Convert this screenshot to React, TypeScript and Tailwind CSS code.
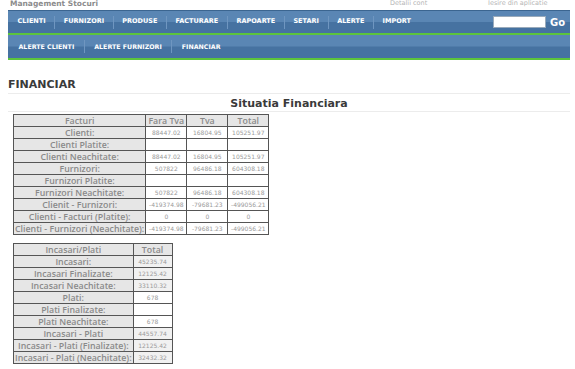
import React from 'react';

const MENU = ['CLIENTI', 'FURNIZORI', 'PRODUSE', 'FACTURARE', 'RAPOARTE', 'SETARI', 'ALERTE', 'IMPORT'];
const SUBMENU = ['ALERTE CLIENTI', 'ALERTE FURNIZORI', 'FINANCIAR'];

const facturi: [string, string, string, string][] = [
  ['Clienti:', '88447.02', '16804.95', '105251.97'],
  ['Clienti Platite:', '', '', ''],
  ['Clienti Neachitate:', '88447.02', '16804.95', '105251.97'],
  ['Furnizori:', '507822', '96486.18', '604308.18'],
  ['Furnizori Platite:', '', '', ''],
  ['Furnizori Neachitate:', '507822', '96486.18', '604308.18'],
  ['Clienit - Furnizori:', '-419374.98', '-79681.23', '-499056.21'],
  ['Clienti - Facturi (Platite):', '0', '0', '0'],
  ['Clienti - Furnizori (Neachitate):', '-419374.98', '-79681.23', '-499056.21'],
];

// third item: value cell shaded
const incasari: [string, string, boolean][] = [
  ['Incasari:', '45235.74', true],
  ['Incasari Finalizate:', '12125.42', true],
  ['Incasari Neachitate:', '33110.32', true],
  ['Plati:', '678', false],
  ['Plati Finalizate:', '', false],
  ['Plati Neachitate:', '678', false],
  ['Incasari - Plati', '44557.74', true],
  ['Incasari - Plati (Finalizate):', '12125.42', true],
  ['Incasari - Plati (Neachitate):', '32432.32', true],
];

const bar = 'bg-[linear-gradient(#5a86b4_0%,#5a86b4_48%,#4672a1_52%,#4672a1_100%)]';

function Label({ children }: { children: React.ReactNode }) {
  return (
    <td className="h-[12px] border border-[#555] bg-[#e6e6e6] px-[1px] text-center font-['Open_Sans',sans-serif] text-[8.8px] font-semibold leading-[10px] text-[#8a8a8a] whitespace-nowrap">
      {children}
    </td>
  );
}

function Val({ children, shaded = false, w = 'w-[41px]' }: { children: React.ReactNode; shaded?: boolean; w?: string }) {
  return (
    <td className={`h-[12px] ${w} border border-[#555] px-[1px] text-center text-[6px] leading-[10px] text-[#9a9a9a] whitespace-nowrap ${shaded ? 'bg-[#f1f1f1]' : 'bg-white'}`}>
      {children}
    </td>
  );
}

export default function App() {
  return (
    <div className="w-[575px] h-[369px] overflow-hidden bg-white font-['DejaVu_Sans',sans-serif]">
      {/* header */}
      <div className="relative h-[10px]">
        <span className="absolute left-[10px] top-0 text-[7.5px] font-bold leading-[8px] text-[#8c8c8c]">Management Stocuri</span>
        <span className="absolute left-[390px] top-0 text-[6.5px] leading-[7px] text-[#b5b5b5]">Detalii cont</span>
        <span className="absolute left-[488px] top-0 text-[6.5px] leading-[7px] text-[#b5b5b5]">Iesire din aplicatie</span>
      </div>

      <div className="mx-[8px] w-[562px]">
        <div className={`flex h-[23px] items-center border-t border-[#3b6590] ${bar}`}>
          <div className="flex flex-1 items-center pl-[1px]">
            {MENU.map((m, i) => (
              <React.Fragment key={m}>
                {i > 0 && <span className="h-[13px] w-px bg-[#6f96c0]" />}
                <span className="px-[8.6px] text-[6.5px] font-bold text-white">{m}</span>
              </React.Fragment>
            ))}
          </div>
          <div className="h-[12px] w-[53px] border border-[#9ab] bg-white" />
          <span className="ml-[4px] mr-[5px] text-[10px] font-bold text-white">Go</span>
        </div>
        <div className="h-[2px] bg-[#5cc43c]" />
        <div className={`flex h-[23px] items-center pl-[1px] ${bar}`}>
          {SUBMENU.map((m, i) => (
            <React.Fragment key={m}>
              {i > 0 && <span className="h-[13px] w-px bg-[#6f96c0]" />}
              <span className="px-[9.5px] text-[6.3px] font-bold text-white">{m}</span>
            </React.Fragment>
          ))}
        </div>
        <div className="h-[2px] bg-[#5cc43c]" />
      </div>

      <div className="mx-[8px] mt-[18px] w-[562px]">
        <div className="border-b border-[#ececec] pb-[2px] text-[11px] font-bold leading-[13px] text-[#3a3a3a]">FINANCIAR</div>
        <div className="mt-[3px] border-b border-[#ececec] pb-[1px] text-center text-[11px] font-bold leading-[13px] text-[#3a3a3a]">
          Situatia Financiara
        </div>

        <table className="ml-[5px] mt-[2px] border-collapse border border-[#333]">
          <tbody>
            <tr>
              <Label>Facturi</Label>
              <Label>Fara Tva</Label>
              <Label>Tva</Label>
              <Label>Total</Label>
            </tr>
            {facturi.map(r => (
              <tr key={r[0]}>
                <Label>{r[0]}</Label>
                <Val>{r[1]}</Val>
                <Val>{r[2]}</Val>
                <Val>{r[3]}</Val>
              </tr>
            ))}
          </tbody>
        </table>

        <table className="ml-[5px] mt-[8px] border-collapse border border-[#333]">
          <tbody>
            <tr>
              <Label>Incasari/Plati</Label>
              <Label>Total</Label>
            </tr>
            {incasari.map(r => (
              <tr key={r[0]}>
                <Label>{r[0]}</Label>
                <Val shaded={r[2]} w="w-[39px]">{r[1]}</Val>
              </tr>
            ))}
          </tbody>
        </table>
      </div>
    </div>
  );
}
